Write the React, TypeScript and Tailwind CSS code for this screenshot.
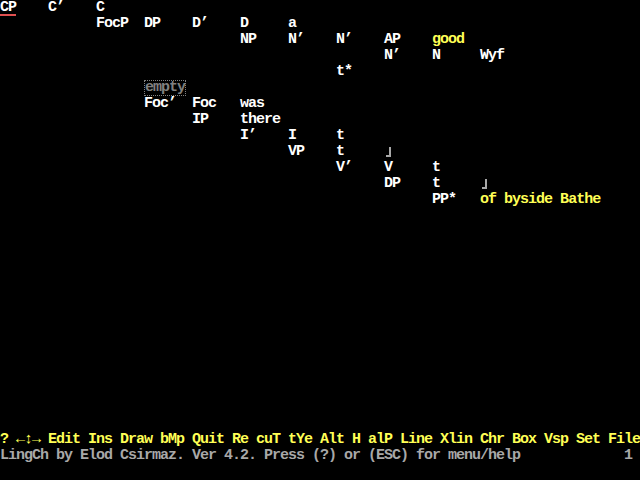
import React from 'react';

type Seg = { t: string; c?: 'w' | 'y' | 'g' | 'box' | 'cur' | 'glyph' };

const sp = (n: number): Seg => ({ t: ' '.repeat(n) });

const rows: Seg[][] = [
    [{ t: 'CP', c: 'cur' }, { t: '    C’    C' }],
    [sp(12), { t: 'FocP  DP    D’    D     a' }],
    [sp(30), { t: 'NP    N’    N’    AP    ' }, { t: 'good', c: 'y' }],
    [sp(48), { t: 'N’    N     Wyf' }],
    [sp(42), { t: 't*' }],
    [sp(18), { t: 'empty', c: 'box' }],
    [sp(18), { t: 'Foc’  Foc   was' }],
    [sp(24), { t: 'IP    there' }],
    [sp(30), { t: 'I’    I     t' }],
    [sp(36), { t: 'VP    t     ' }, { t: '┘', c: 'glyph' }],
    [sp(42), { t: 'V’    V     t' }],
    [sp(48), { t: 'DP    t     ' }, { t: '┘', c: 'glyph' }],
    [sp(54), { t: 'PP*   ' }, { t: 'of byside Bathe', c: 'y' }],
];

const Cell = ({ s }: { s: Seg }) => {
    if (s.c === 'y') return <span className="text-[#ffff55]">{s.t}</span>;
    if (s.c === 'cur')
        return (
            <span className="relative inline-block h-4 text-white">
                {s.t}
                <span className="absolute left-0 top-[14px] h-[2px] w-4 bg-[#e05050]" />
            </span>
        );
    if (s.c === 'box')
        return (
            <span className="inline-block h-4 border border-dotted border-[#808080] text-[#808080] leading-[14px]">
                {s.t}
            </span>
        );
    if (s.c === 'glyph')
        // box corner drawn with borders
        return (
            <span className="inline-flex w-2 h-4 align-top pt-[3px] pl-[2px]">
                <span className="w-[5px] h-[10px] border-r-2 border-b-2 border-[#a8a8a8]" />
            </span>
        );
    return <span>{s.t}</span>;
};

const Arrow = ({ ch }: { ch: string }) => (
    <span className="inline-block w-2 text-center tracking-normal">{ch}</span>
);

const App = () => {
    return (
        <div
            className="w-[640px] h-[480px] bg-black text-white font-bold text-[15px] tracking-[-1px] leading-4 whitespace-pre overflow-hidden flex flex-col"
            style={{ fontFamily: '"Liberation Mono", "DejaVu Sans Mono", monospace' }}
        >
            {rows.map((r, i) => (
                <div key={i} className="h-4">
                    {r.map((s, j) => (
                        <Cell key={j} s={s} />
                    ))}
                </div>
            ))}
            <div className="flex-1" />
            <div className="h-4 text-[#ffff55]">
                {'? '}
                <Arrow ch="←" />
                <Arrow ch="↕" />
                <Arrow ch="→" />
                {' Edit Ins Draw bMp Quit Re cuT tYe Alt H alP Line Xlin Chr Box Vsp Set File'}
            </div>
            <div className="h-4 text-[#a8a8a8]">
                {'LingCh by Elod Csirmaz. Ver 4.2. Press (?) or (ESC) for menu/help             1 '}
            </div>
            <div className="h-4" />
        </div>
    );
};

export default App;
